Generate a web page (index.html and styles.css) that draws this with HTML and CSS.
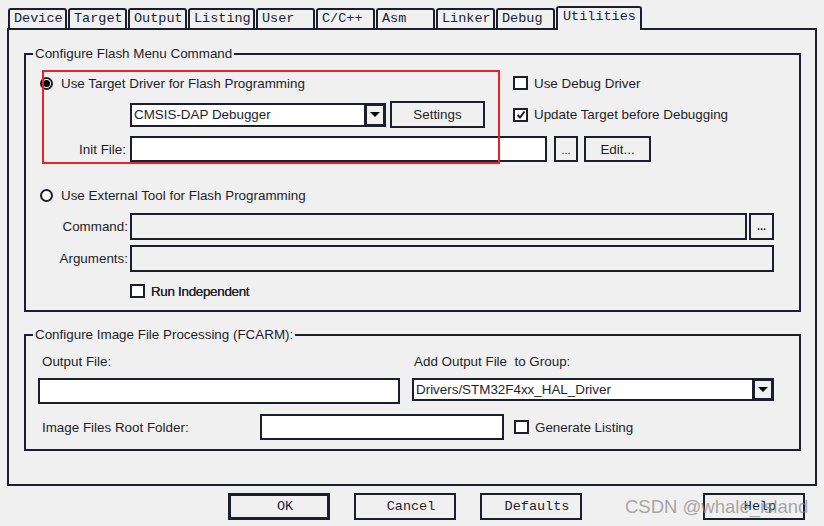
FILE: index.html
```html
<!DOCTYPE html>
<html>
	<head>
		<meta charset="UTF-8">
		<title>Options for Target - Utilities</title>
		<link rel="stylesheet" href="styles.css">
	</head>
	<body>
		<div class="tabs">
			<div class="tab">Device</div>
			<div class="tab">Target</div>
			<div class="tab">Output</div>
			<div class="tab tab-wide">Listing</div>
			<div class="tab">User</div>
			<div class="tab">C/C++</div>
			<div class="tab">Asm</div>
			<div class="tab">Linker</div>
			<div class="tab">Debug</div>
			<div class="tab tab-sel">Utilities</div>
		</div>

		<div class="panel">
			<!-- 第一组：Flash 菜单命令 -->
			<div class="group group-flash">
				<div class="group-title">Configure Flash Menu Command</div>

				<div class="row row-a">
					<label class="opt opt-left"><span class="radio on"></span>Use Target Driver for Flash Programming</label>
					<label class="opt"><span class="check"></span>Use Debug Driver</label>
				</div>

				<div class="row row-b">
					<div class="drop drop-driver">
						<span class="drop-text">CMSIS-DAP Debugger</span>
						<span class="drop-btn"><i></i></span>
					</div>
					<div class="btn btn-settings">Settings</div>
					<label class="opt"><span class="check on"><svg width="10" height="10" viewBox="0 0 10 10"><polyline points="1.5,5 4,7.5 8.5,1.5" fill="none" stroke="#1c1e2b" stroke-width="2"/></svg></span>Update Target before Debugging</label>
				</div>

				<div class="row row-c">
					<span class="lbl">Init File:</span>
					<div class="field field-init"></div>
					<div class="btn btn-dots">...</div>
					<div class="btn btn-edit">Edit...</div>
				</div>

				<div class="row row-d">
					<label class="opt"><span class="radio"></span>Use External Tool for Flash Programming</label>
				</div>

				<div class="row row-e">
					<span class="lbl lbl-tight">Command:</span>
					<div class="field field-off field-cmd"></div>
					<div class="btn btn-dots btn-dots-off">...</div>
				</div>

				<div class="row row-f">
					<span class="lbl lbl-tight">Arguments:</span>
					<div class="field field-off field-args"></div>
				</div>

				<div class="row row-g">
					<label class="opt opt-off"><span class="check"></span>Run Independent</label>
				</div>
			</div>

			<!-- 第二组：FCARM -->
			<div class="group group-image">
				<div class="group-title">Configure Image File Processing (FCARM):</div>

				<div class="row row-labels">
					<span class="lbl-out">Output File:</span>
					<span>Add Output File&nbsp; to Group:</span>
				</div>

				<div class="row row-inputs">
					<div class="field field-out"></div>
					<div class="drop drop-group">
						<span class="drop-text">Drivers/STM32F4xx_HAL_Driver</span>
						<span class="drop-btn"><i></i></span>
					</div>
				</div>

				<div class="row row-root">
					<span class="lbl-root">Image Files Root Folder:</span>
					<div class="field field-root"></div>
					<label class="opt"><span class="check"></span>Generate Listing</label>
				</div>
			</div>
		</div>

		<div class="buttons">
			<div class="dbtn dbtn-default">OK</div>
			<div class="dbtn">Cancel</div>
			<div class="dbtn">Defaults</div>
			<div class="dbtn dbtn-help">Help</div>
		</div>

		<div class="mark"></div>
		<div class="watermark">CSDN @whale_island</div>
	</body>
</html>
```

FILE: styles.css
```css
*{
	margin:0px;
	padding:0px;
	box-sizing: border-box;
}
body{
	width: 824px;
	height: 526px;
	background: #f0f0f0;
	color: #1e1e2a;
	font-family: "Liberation Sans", Arial, sans-serif;
	font-size: 13.4px;
	position: relative;
	overflow: hidden;
}
label{
	cursor: default;
}

/* 标签页 */
.tabs{
	display: flex;
	align-items: flex-end;
	gap: 1px;
	height: 28px;
	padding-left: 8px;
}
.tab{
	width: 59px;
	height: 20px;
	border: 2px solid #1c1e2b;
	border-bottom: none;
	border-radius: 3px 3px 0 0;
	padding: 1px 0 0 4px;
	font-family: "Liberation Mono", "Courier New", monospace;
	font-size: 13.5px;
	line-height: 16px;
	color: #1b2333;
	white-space: nowrap;
}
.tab-wide{
	width: 67px;
}
.tab-sel{
	width: 86px;
	height: 24px;
	margin-bottom: -2px;
	padding-left: 5px;
	background: #f0f0f0;
	position: relative;
	z-index: 1;
}

/* 面板 */
.panel{
	margin-left: 7px;
	width: 810px;
	height: 458px;
	border: 2px solid #1c1e2b;
	padding: 23px 0 0 15px;
}
.group{
	width: 777px;
	border: 2px solid #1c1e2b;
}
.group-flash{
	height: 259px;
}
.group-image{
	height: 117px;
	margin-top: 22px;
}
.group-title{
	display: table;
	margin: -8px 0 0 7px;
	padding: 0 2px;
	line-height: 14px;
	background: #f0f0f0;
}

.row{
	display: flex;
	align-items: center;
}
.row-a{ margin-top: 15px; height: 14px; padding-left: 14px; }
.row-b{ margin-top: 11px; height: 27px; padding-left: 104px; }
.row-c{ margin-top: 8px; height: 26px; }
.row-d{ margin-top: 27px; height: 12px; padding-left: 14px; }
.row-e{ margin-top: 12px; height: 27px; }
.row-f{ margin-top: 5px; height: 27px; }
.row-g{ margin-top: 12px; height: 14px; padding-left: 104px; }

.opt{
	display: flex;
	align-items: center;
	white-space: nowrap;
}
.opt-left{
	width: 473px;
}
.opt-off{
	color: #23232c;
	text-shadow: 0 0 0.4px #23232c;
	letter-spacing: -0.3px;
}

.radio{
	width: 13px;
	height: 13px;
	border: 2px solid #1c1e2b;
	border-radius: 50%;
	background: #fff;
	margin-right: 8px;
	display: flex;
	align-items: center;
	justify-content: center;
}
.radio.on::after{
	content: "";
	width: 7px;
	height: 7px;
	border-radius: 50%;
	background: #000;
}
.check{
	width: 15px;
	height: 14px;
	border: 2px solid #1c1e2b;
	background: #fff;
	margin-right: 6px;
	display: flex;
	align-items: center;
	justify-content: center;
}

.lbl{
	width: 104px;
	text-align: right;
	padding-right: 4px;
}
.lbl-tight{
	padding-right: 2px;
}

.field{
	height: 100%;
	border: 2px solid #1c1e2b;
	background: #fff;
}
.field-off{
	background: #f0f0f0;
}
.field-init{ width: 417px; }
.field-cmd{ width: 617px; }
.field-args{ width: 644px; }

.btn{
	height: 100%;
	border: 2px solid #1c1e2b;
	display: flex;
	align-items: center;
	justify-content: center;
}
.btn-settings{
	width: 95px;
	margin: 0 28px 0 4px;
}
.btn-dots{
	width: 24px;
	margin-left: 7px;
	font-size: 11px;
	align-items: flex-end;
	padding-bottom: 4px;
}
.btn-dots-off{
	width: 25px;
	margin-left: 2px;
	font-weight: bold;
	padding-bottom: 6px;
}
.btn-edit{
	width: 67px;
	margin-left: 6px;
}

/* 下拉框 */
.drop{
	display: flex;
	align-items: stretch;
	border: 2px solid #1c1e2b;
	background: #fff;
}
.drop-driver{
	width: 256px;
	height: 24px;
}
.drop-text{
	flex: 1;
	padding-left: 2px;
	line-height: 20px;
	white-space: nowrap;
}
.drop-btn{
	width: 22px;
	margin: -2px -2px -2px 0;
	border: 3px solid #1c1e2b;
	background: #f0f0f0;
	display: flex;
	align-items: center;
	justify-content: center;
}
.drop-btn i{
	width: 0;
	height: 0;
	border-left: 5px solid transparent;
	border-right: 5px solid transparent;
	border-top: 5px solid #000;
}

/* 第二组 */
.row-labels{ margin-top: 12px; height: 14px; padding-left: 16px; }
.row-inputs{ margin-top: 10px; height: 26px; padding-left: 12px; align-items: flex-start; }
.row-root{ margin-top: 10px; height: 26px; padding-left: 16px; }
.lbl-out{
	width: 372px;
}
.field-out{
	width: 362px;
}
.drop-group{
	width: 362px;
	height: 23px;
	margin-left: 12px;
}
.drop-group .drop-text{
	line-height: 19px;
}
.lbl-root{
	width: 218px;
}
.field-root{
	width: 244px;
	margin-right: 10px;
}

/* 底部按钮 */
.buttons{
	display: flex;
	margin-top: 7px;
	padding-left: 228px;
	gap: 24px;
}
.dbtn{
	width: 102px;
	height: 27px;
	border: 2px solid #1c1e2b;
	padding-left: 12px;
	font-family: "Liberation Mono", "Courier New", monospace;
	font-size: 13.5px;
	color: #1b2333;
	display: flex;
	align-items: center;
	justify-content: center;
}
.dbtn-default{
	border-width: 3px;
}
.dbtn-help{
	margin-left: 97px;
}

/* 红框标注 */
.mark{
	position: absolute;
	left: 42px;
	top: 70px;
	width: 458px;
	height: 94px;
	border: 2px solid #e8212b;
	pointer-events: none;
}
.watermark{
	position: absolute;
	left: 625px;
	top: 497px;
	font-size: 18.5px;
	line-height: 20px;
	color: rgba(140,140,140,0.75);
	white-space: nowrap;
	pointer-events: none;
}
```
